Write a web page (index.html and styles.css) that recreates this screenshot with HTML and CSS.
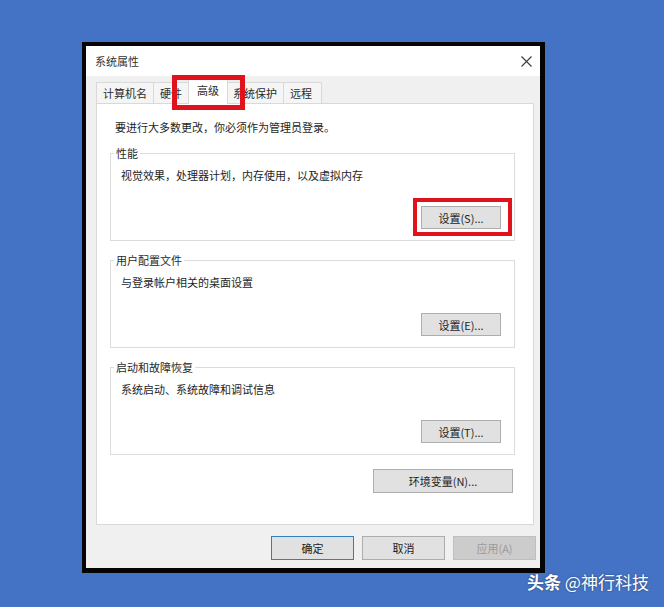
FILE: index.html
```html
<!DOCTYPE html>
<html lang="zh-CN">
<head>
  <meta charset="UTF-8">
  <meta name="viewport" content="width=device-width, initial-scale=1.0">
  <title>系统属性</title>
  <link rel="stylesheet" href="styles.css">
</head>
<body>
  <div class="page">
    <div class="window">
      <div class="titlebar">
        <span class="title">系统属性</span>
        <svg class="close" width="11" height="11" viewBox="0 0 11 11">
          <path d="M0.5 0.5 L10.5 10.5 M10.5 0.5 L0.5 10.5" stroke="#3a3a3a" stroke-width="1.1" fill="none"/>
        </svg>
      </div>

      <div class="window-body">
        <div class="tabs">
          <div class="tab">计算机名</div>
          <div class="tab">硬件</div>
          <div class="tab tab-active">高级<span class="mark mark-tab"></span></div>
          <div class="tab">系统保护</div>
          <div class="tab tab-last">远程</div>
        </div>

        <div class="panel">
          <p class="note">要进行大多数更改，你必须作为管理员登录。</p>

          <fieldset class="group">
            <legend>性能</legend>
            <p class="desc">视觉效果，处理器计划，内存使用，以及虚拟内存</p>
            <div class="group-actions">
              <button class="btn btn-small">设置(S)...<span class="mark mark-btn"></span></button>
            </div>
          </fieldset>

          <fieldset class="group">
            <legend>用户配置文件</legend>
            <p class="desc">与登录帐户相关的桌面设置</p>
            <div class="group-actions">
              <button class="btn btn-small">设置(E)...</button>
            </div>
          </fieldset>

          <fieldset class="group">
            <legend>启动和故障恢复</legend>
            <p class="desc">系统启动、系统故障和调试信息</p>
            <div class="group-actions">
              <button class="btn btn-small">设置(T)...</button>
            </div>
          </fieldset>

          <div class="panel-actions">
            <button class="btn btn-wide">环境变量(N)...</button>
          </div>
        </div>

        <div class="footer">
          <button class="btn btn-default">确定</button>
          <button class="btn">取消</button>
          <button class="btn" disabled>应用(A)</button>
        </div>
      </div>
    </div>

    <div class="watermark"><b>头条</b> @神行科技</div>
  </div>
</body>
</html>
```

FILE: styles.css
```css
body {
  margin: 0;
  background-color: #4472c4;
  font-family: "Noto Sans CJK SC", "Noto Sans", sans-serif;
  font-size: 11px;
  color: #1e1e1e;
}

.page {
  position: relative;
  width: 664px;
  height: 607px;
  box-sizing: border-box;
  padding: 42px 0 0 82px;
}

/* dialog frame */
.window {
  width: 463px;
  height: 531px;
  box-sizing: border-box;
  border-style: solid;
  border-color: #050505;
  border-width: 4px 5px 5px 4px;
  background-color: #f0f0f0;
  display: flex;
  flex-direction: column;
}

.titlebar {
  height: 30px;
  background-color: #fff;
  display: flex;
  align-items: center;
  justify-content: space-between;
  padding: 0 8px 0 9px;
  flex-shrink: 0;
}

.title {
  color: #333;
  line-height: 14px;
}

.window-body {
  flex: 1;
  display: flex;
  flex-direction: column;
  padding: 2px 4px 8px 10px;
}

/* tab strip */
.tabs {
  height: 25px;
  display: flex;
  align-items: flex-end;
}

.tab {
  position: relative;
  height: 21px;
  box-sizing: border-box;
  padding: 0 6px;
  border: 1px solid #d9d9d9;
  border-bottom: none;
  background-color: #f5f5f5;
  line-height: 20px;
  color: #2a2a2a;
}

.tab + .tab {
  margin-left: -1px;
}

.tab-last {
  padding: 0 9px 0 6px;
}

.tab-active {
  height: 26px;
  margin: 0 -2px -1px;
  padding: 0 8px;
  background-color: #fff;
  line-height: 22px;
  z-index: 1;
}

.tab-active + .tab {
  margin-left: 0;
}

/* red highlight frames */
.mark {
  position: absolute;
  border: 5px solid #e0121c;
  pointer-events: none;
  z-index: 2;
}

.mark-tab {
  left: -17px;
  right: -18px;
  top: -4px;
  bottom: -6px;
}

.mark-btn {
  left: -9px;
  right: -12px;
  top: -9px;
  bottom: -8px;
  border-width: 4px;
}

/* tab page */
.panel {
  height: 422px;
  box-sizing: border-box;
  margin-right: 2px;
  border: 1px solid #d9d9d9;
  background-color: #fff;
  padding: 16px 18px 0 13px;
  display: flex;
  flex-direction: column;
}

.note {
  margin: 0 0 12px 5px;
  line-height: 14px;
}

.group {
  margin: 0 0 12px;
  padding: 8px 13px 11px 10px;
  border: 1px solid #dcdcdc;
  min-width: 0;
}

.group legend {
  margin-left: -7px;
  padding: 0 2px;
  line-height: 14px;
  color: #2a2a2a;
}

.desc {
  margin: 0;
  line-height: 14px;
}

.group-actions {
  display: flex;
  justify-content: flex-end;
  margin-top: 24px;
}

.panel-actions {
  display: flex;
  justify-content: flex-end;
  margin: 2px 2px 0 0;
}

/* push buttons */
.btn {
  position: relative;
  height: 24px;
  width: 83px;
  box-sizing: border-box;
  border: 1px solid #adadad;
  background-color: #e1e1e1;
  font-family: inherit;
  font-size: 11px;
  color: #1e1e1e;
  padding: 0;
}

.btn-small {
  width: 80px;
  height: 23px;
}

.btn-wide {
  width: 140px;
}

.btn-default {
  border-color: #2f7fc1;
}

.btn:disabled {
  background-color: #cccccc;
  border-color: #bfbfbf;
  color: #9a9a9a;
}

.footer {
  margin-top: 11px;
  display: flex;
  justify-content: flex-end;
  gap: 8px;
}

.watermark {
  position: absolute;
  left: 527px;
  top: 571px;
  color: #fff;
  font-size: 17px;
  line-height: 22px;
  text-shadow: 0 0 2px rgba(0, 0, 0, 0.45);
}

.watermark b {
  font-weight: 700;
}
```
